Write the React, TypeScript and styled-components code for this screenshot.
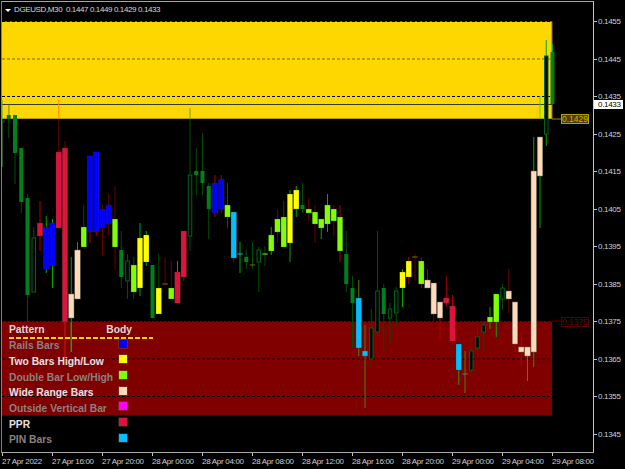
import React from "react";
import styled, { createGlobalStyle } from "styled-components";

const Global = createGlobalStyle`
  html, body { margin: 0; padding: 0; background: #000; }
  #root { width: 625px; height: 469px; overflow: hidden; }
`;

const font = `"Liberation Sans", Arial, sans-serif`;

const Screen = styled.div`
  width: 625px;
  height: 469px;
  background: #000;
  display: flex;
  flex-direction: column;
  font-family: ${font};
`;
const ChartRow = styled.div`
  display: flex;
  height: 453px;
`;
const Plot = styled.div`
  position: relative;
  box-sizing: border-box;
  width: 593px;
  height: 452px;
  margin: 1px 0 0 1px;
  border-style: solid;
  border-width: 1px;
  border-color: #a8a8a8 #c4c4c4 #a8a8a8 #808080;
`;
const ChartSvg = styled.svg`
  display: block;
  width: 591px;
  height: 450px;
`;
const Title = styled.div`
  position: absolute;
  left: 3px;
  top: 3px;
  display: flex;
  align-items: center;
  gap: 3px;
  height: 10px;
  color: #d8d8d8;
  font-size: 8px;
  letter-spacing: -0.38px;
  line-height: 10px;
  white-space: pre;
`;
const TitleArrow = styled.span`
  width: 0;
  height: 0;
  border-style: solid;
  border-width: 3px 3px 0 3px;
  border-color: #fff transparent transparent transparent;
`;
const PriceTag = styled.div<{ $c: string; $t: number; $bg?: string; $text: string }>`
  position: absolute;
  left: 559px;
  top: ${(p) => p.$t}px;
  box-sizing: border-box;
  width: 28px;
  height: 10px;
  border: 1px solid ${(p) => p.$c};
  background: ${(p) => p.$bg || "#000"};
  color: ${(p) => p.$text};
  font-size: 8.5px;
  line-height: 8px;
  text-align: center;
`;
const Legend = styled.div`
  position: absolute;
  left: 7px;
  top: 321px;
  width: 144px;
  font-size: 10.3px;
  font-weight: 700;
`;
const LegendHead = styled.div`
  display: flex;
  justify-content: space-between;
  height: 15px;
  padding-right: 21px;
  line-height: 14px;
  color: #e0d8d8;
  position: relative;
  &::after {
    content: "";
    position: absolute;
    left: 0;
    right: 0;
    bottom: -1px;
    height: 2px;
    background: repeating-linear-gradient(90deg, #ffd700 0 5px, transparent 5px 7px);
  }
`;
const LegendRow = styled.div<{ $dim?: boolean }>`
  display: flex;
  align-items: center;
  height: 15.67px;
  color: ${(p) => (p.$dim ? "#8c8080" : "#e8e0e0")};
  white-space: nowrap;
`;
const LegendName = styled.span`
  width: 110px;
`;
const Swatch = styled.span<{ $c: string }>`
  width: 8px;
  height: 8px;
  margin-bottom: 4px;
  background: ${(p) => p.$c};
  box-shadow: 0 0 0 0.5px rgba(128, 128, 128, 0.5);
`;
const PriceAxis = styled.div`
  position: relative;
  display: flex;
  flex-direction: column;
  padding-top: 2.75px;
  flex: 1;
`;
const PriceTick = styled.div`
  position: relative;
  height: 37.5px;
  display: flex;
  align-items: center;
  padding-left: 4px;
  color: #c8d0d8;
  font-size: 8px;
  letter-spacing: -0.3px;
  &::before {
    content: "";
    position: absolute;
    left: 0;
    top: 18.5px;
    width: 3px;
    height: 1px;
    background: #c4c4c4;
  }
`;
const CurrentPrice = styled.div`
  position: absolute;
  left: 0;
  top: 99.5px;
  width: 29px;
  height: 9px;
  padding-left: 4px;
  box-sizing: border-box;
  background: #fff;
  color: #000;
  font-size: 8px;
  letter-spacing: -0.3px;
  line-height: 9px;
`;
const TimeAxis = styled.div`
  display: flex;
  padding-left: 2px;
`;
const TimeCell = styled.div`
  position: relative;
  width: 50px;
  flex: none;
  padding-top: 2px;
  height: 14px;
  line-height: 14px;
  font-size: 8px;
  letter-spacing: -0.3px;
  color: #c8d0d8;
  white-space: nowrap;
  &::before {
    content: "";
    position: absolute;
    left: 0;
    top: 0;
    width: 1px;
    height: 3px;
    background: #c4c4c4;
  }
`;

const GREEN = "#007f1f";
const DARK = "#004f00";
const HOLLOW = "#00641a";
const BODY: Record<string, string> = {
  G: GREEN, R: "#dc143c", B: "#0000ff", P: "#ffdab9", L: "#7fff00", Y: "#ffff00", C: "#00bfff",
};
const WICK: Record<string, string> = {
  g: "#00a800", d: DARK, r: "#b00000", m: "#6a0000", o: "#4f8000",
};

type C = [string, number, number, number, number, string];
const candles: C[] = [
  ["G", 0, 0, 0, 0, "d"],
  ["G", 105, 138, 115, 119, "d"],
  ["G", 115, 184, 115, 153, "d"],
  ["G", 148, 213, 148, 202, "d"],
  ["G", 194, 322, 198, 295, "d"],
  ["H", 227, 292, 238, 292, "d"],
  ["R", 201, 251, 223, 236, "r"],
  ["B", 216, 273, 227, 269, "g"],
  ["B", 219, 288, 223, 266, "g"],
  ["R", 119, 228, 152, 228, "m"],
  ["R", 141, 322, 148, 322, "m"],
  ["P", 257, 352, 294, 318, "g"],
  ["P", 242, 299, 250, 299, "g"],
  ["L", 205, 247, 227, 247, "d"],
  ["B", 156, 243, 156, 232, "r"],
  ["B", 152, 236, 152, 232, "r"],
  ["B", 205, 255, 209, 228, "m"],
  ["B", 194, 236, 205, 224, "m"],
  ["L", 186, 270, 219, 247, "m"],
  ["G", 231, 288, 250, 277, "d"],
  ["H", 254, 299, 261, 281, "d"],
  ["L", 257, 299, 265, 292, "d"],
  ["Y", 223, 296, 238, 288, "g"],
  ["Y", 231, 266, 235, 262, "g"],
  ["G", 265, 318, 265, 318, "d"],
  ["Y", 254, 314, 288, 314, "d"],
  ["D", 257, 284, 284, 284, "m"],
  ["L", 261, 299, 288, 299, "m"],
  ["R", 261, 303, 272, 303, "g"],
  ["R", 231, 281, 231, 277, "d"],
  ["H", 119, 251, 175, 236, "d"],
  ["G", 148, 195, 171, 175, "d"],
  ["G", 133, 195, 171, 183, "d"],
  ["G", 183, 239, 186, 209, "d"],
  ["B", 175, 217, 183, 213, "r"],
  ["B", 175, 213, 179, 209, "r"],
  ["L", 183, 228, 205, 217, "r"],
  ["C", 212, 262, 212, 258, "d"],
  ["D", 242, 273, 254, 254, "g"],
  ["G", 250, 269, 257, 262, "d"],
  ["D", 242, 269, 265, 265, "d"],
  ["H", 247, 292, 250, 262, "d"],
  ["D", 246, 266, 254, 254, "d"],
  ["L", 227, 255, 235, 251, "g"],
  ["L", 209, 243, 219, 232, "m"],
  ["L", 201, 247, 217, 247, "d"],
  ["Y", 190, 262, 194, 243, "g"],
  ["Y", 186, 217, 190, 209, "g"],
  ["G", 183, 213, 205, 209, "d"],
  ["L", 198, 221, 209, 213, "m"],
  ["L", 205, 243, 212, 224, "m"],
  ["L", 219, 239, 219, 228, "g"],
  ["L", 194, 232, 205, 224, "g"],
  ["L", 205, 236, 209, 221, "m"],
  ["L", 205, 262, 217, 251, "r"],
  ["G", 231, 292, 254, 284, "d"],
  ["G", 276, 348, 288, 303, "d"],
  ["C", 280, 356, 298, 348, "o"],
  ["C", 325, 408, 351, 356, "o"],
  ["H", 309, 367, 328, 359, "d"],
  ["H", 231, 337, 291, 332, "d"],
  ["G", 284, 352, 288, 314, "d"],
  ["H", 303, 344, 309, 318, "d"],
  ["H", 287, 326, 291, 313, "d"],
  ["Y", 269, 307, 272, 288, "g"],
  ["Y", 257, 284, 261, 277, "r"],
  ["D", 254, 280, 257, 257, "m"],
  ["L", 257, 288, 261, 284, "r"],
  ["P", 269, 288, 280, 288, "r"],
  ["P", 283, 329, 283, 314, "m"],
  ["P", 302, 341, 302, 318, "r"],
  ["R", 276, 307, 298, 303, "r"],
  ["R", 295, 341, 306, 341, "r"],
  ["C", 344, 385, 344, 370, "o"],
  ["D", 351, 393, 374, 374, "o"],
  ["H", 347, 374, 351, 370, "d"],
  ["H", 325, 356, 337, 348, "d"],
  ["H", 321, 352, 325, 332, "d"],
  ["L", 307, 329, 317, 322, "g"],
  ["L", 294, 337, 294, 322, "g"],
  ["H", 284, 310, 288, 299, "d"],
  ["P", 269, 313, 291, 299, "m"],
  ["P", 302, 352, 302, 344, "r"],
  ["P", 332, 367, 347, 352, "r"],
  ["P", 347, 381, 347, 356, "o"],
  ["P", 137, 367, 171, 352, "g"],
  ["P", 137, 228, 137, 176, "g"],
  ["H", 40, 146, 56, 134, "g"],
  ["G", 44, 104, 52, 104, "g"],
];

const extras: [number, number, number, string][] = [
  [8.75, 105, 115, "#c8c020"],
  [58.75, 100, 119, "#ff8c00"],
  [65, 322, 358, "#d01818"],
  [71.25, 322, 352, "#3fa000"],
  [190, 108, 119, "#78a030"],
  [540, 96, 119, "#40e000"],
  [2, 100, 167, "#4a9a5a"],
  [4, 120, 123, "#404040"],
];

const Candle = ({ c, i }: { c: C; i: number }) => {
  const [kind, wt, wb, bt, bb, w] = c;
  const x = 2.5 + 6.25 * i;
  if (i === 0) return null;
  const wick = <line x1={x} x2={x} y1={wt} y2={wb} stroke={WICK[w]} strokeWidth={1} />;
  if (kind === "D") {
    const col = i === 38 ? "#00bfff" : i === 42 ? "#7fff00" : i === 74 ? "#4a7a90" : "#807000";
    return (
      <g>
        {wick}
        <line x1={x - 2.75} x2={x + 2.75} y1={bt} y2={bt} stroke={col} strokeWidth={1} />
      </g>
    );
  }
  if (kind === "H") {
    return (
      <g>
        {wick}
        <rect x={x - 1.75} y={bt} width={3.5} height={bb - bt} fill="#000" stroke={HOLLOW} strokeWidth={1} />
      </g>
    );
  }
  const narrow = kind === "G";
  const wd = narrow ? 4 : 5.5;
  return (
    <g>
      {wick}
      <rect
        x={x - wd / 2}
        y={bt}
        width={wd}
        height={bb - bt}
        fill={BODY[kind]}
        stroke={kind === "P" ? "#6a6a60" : narrow ? "none" : "#3a3a30"}
        strokeWidth={kind === "P" ? 0.5 : 0.25}
      />
    </g>
  );
};

const legend: [string, string, boolean][] = [
  ["Rails Bars", "#0000ff", true],
  ["Two Bars High/Low", "#ffff00", false],
  ["Double Bar Low/High", "#7fff00", true],
  ["Wide Range Bars", "#ffdab9", false],
  ["Outside Vertical Bar", "#ff00ff", true],
  ["PPR", "#dc143c", false],
  ["PIN Bars", "#00bfff", true],
];
const prices = ["0.1455", "0.1445", "0.1435", "0.1425", "0.1415", "0.1405", "0.1395", "0.1385", "0.1375", "0.1365", "0.1355", "0.1345"];
const times = ["27 Apr 2022", "27 Apr 16:00", "27 Apr 20:00", "28 Apr 00:00", "28 Apr 04:00", "28 Apr 08:00", "28 Apr 12:00", "28 Apr 16:00", "28 Apr 20:00", "29 Apr 00:00", "29 Apr 04:00", "29 Apr 08:00"];

export default function App() {
  return (
    <Screen>
      <Global />
      <ChartRow>
        <Plot>
          <ChartSvg viewBox="2 2 591 450">
            <rect x={2} y={21.5} width={550} height={97} fill="#ffd700" />
            <line x1={552} x2={552} y1={21.5} y2={119} stroke="#8a7400" />
            <line x1={2} x2={552} y1={118.5} y2={118.5} stroke="#b89c00" />
            <line x1={552} x2={561} y1={119} y2={119} stroke="#a08800" />
            <rect x={2} y={321} width={550} height={94.5} fill="#800000" />
            <line x1={552} x2={561} y1={321} y2={321} stroke="#600000" />
            <line x1={2} x2={552} y1={21.5} y2={21.5} stroke="#000" strokeDasharray="3 2" />
            <line x1={2} x2={552} y1={59} y2={59} stroke="#7a6a00" strokeWidth={1.2} strokeDasharray="3 2" />
            <line x1={2} x2={552} y1={96.5} y2={96.5} stroke="#000" strokeDasharray="3 2" />
            <line x1={2} x2={552} y1={104.5} y2={104.5} stroke="#3c3a20" />
            <line x1={2} x2={552} y1={321.5} y2={321.5} stroke="#000" strokeDasharray="2 2" opacity={0.7} />
            <line x1={2} x2={552} y1={359} y2={359} stroke="#000" strokeDasharray="3 2" />
            <line x1={2} x2={552} y1={396.5} y2={396.5} stroke="#000" strokeDasharray="3 2" />
            {candles.map((c, i) => (
              <Candle key={i} c={c} i={i} />
            ))}
            {extras.map(([x, a, b, col], i) => (
              <line key={i} x1={x} x2={x} y1={a} y2={b} stroke={col} strokeWidth={1} />
            ))}
          </ChartSvg>
          <Title>
            <TitleArrow />
            <span>DGEUSD,M30  0.1447 0.1449 0.1429 0.1433</span>
          </Title>
          <PriceTag $c="#b89c00" $t={112} $bg="#4a3e00" $text="#d0b000">0.1429</PriceTag>
          <PriceTag $c="#5a0000" $t={315} $text="#6a0000">0.1375</PriceTag>
          <Legend>
            <LegendHead>
              <span>Pattern</span>
              <span>Body</span>
            </LegendHead>
            {legend.map(([name, col, dim]) => (
              <LegendRow key={name} $dim={dim}>
                <LegendName>{name}</LegendName>
                <Swatch $c={col} />
              </LegendRow>
            ))}
          </Legend>
        </Plot>
        <PriceAxis>
          {prices.map((p) => (
            <PriceTick key={p}>{p}</PriceTick>
          ))}
          <CurrentPrice>0.1433</CurrentPrice>
        </PriceAxis>
      </ChartRow>
      <TimeAxis>
        {times.map((t) => (
          <TimeCell key={t}>{t}</TimeCell>
        ))}
      </TimeAxis>
    </Screen>
  );
}
